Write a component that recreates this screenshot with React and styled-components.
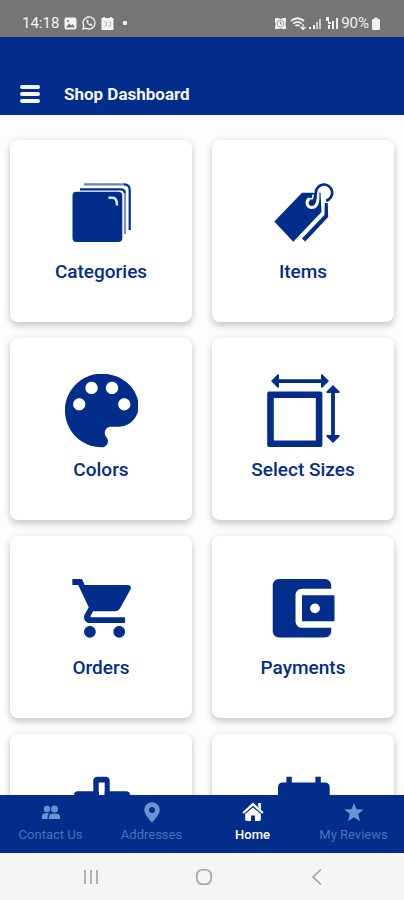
import React from "react";
import styled, { createGlobalStyle } from "styled-components";

const BLUE = "#022d8b";

const GlobalStyle = createGlobalStyle`
  *, *::before, *::after { box-sizing: border-box; }
  body {
    margin: 0;
    background: #fff;
    font-family: Roboto, "Liberation Sans", sans-serif;
  }
  button { font: inherit; border: 0; padding: 0; cursor: pointer; }
`;

const Screen = styled.div`
  display: flex;
  flex-direction: column;
  height: 100vh;
  overflow: hidden;
`;

const StatusBar = styled.div`
  display: flex;
  justify-content: space-between;
  align-items: flex-end;
  flex: none;
  height: 37px;
  padding: 0 24px 6px 22px;
  background: #757575;
  color: #f2f2f2;
  font-size: 15px;
  line-height: 16px;
`;

const StatusGroup = styled.div`
  display: flex;
  align-items: center;
  gap: ${(p) => p.$gap}px;
`;

const Dot = styled.span`
  width: 4px;
  height: 4px;
  margin-left: 4px;
  border-radius: 1px;
  background: currentColor;
`;

const Header = styled.header`
  display: flex;
  align-items: flex-end;
  gap: 24px;
  flex: none;
  height: 78px;
  padding: 0 20px 10px;
  background: ${BLUE};
  color: #f4f6ff;
`;

const MenuButton = styled.button`
  display: flex;
  flex-direction: column;
  justify-content: center;
  gap: 3px;
  width: 20px;
  height: 22px;
  background: none;
`;

const MenuLine = styled.span`
  height: 4px;
  border-radius: 2px;
  background: #f4f6ff;
`;

const Title = styled.h1`
  margin: 0;
  font-size: 17px;
  font-weight: 700;
  line-height: 22px;
`;

const Content = styled.main`
  flex: 1;
  min-height: 0;
  overflow-y: auto;
  scrollbar-width: none;
  padding: 25px 10px;
  background: #fdfdfd;
`;

const CardGrid = styled.div`
  display: grid;
  grid-template-columns: 1fr 1fr;
  gap: 16px 20px;
`;

const Card = styled.button`
  display: flex;
  flex-direction: column;
  align-items: center;
  justify-content: flex-start;
  gap: 10px;
  height: 182px;
  padding-top: 36px;
  border-radius: 8px;
  background: #fff;
  color: ${BLUE};
  box-shadow: 0 4px 7px rgba(0, 0, 0, 0.18), 0 0 9px rgba(0, 0, 0, 0.07);
`;

const CardIcon = styled.svg`
  display: block;
  width: 74px;
  height: 74px;
  fill: currentColor;
`;

const CardLabel = styled.span`
  font-size: 19px;
  font-weight: 500;
  line-height: 24px;
`;

const TabBar = styled.nav`
  display: grid;
  grid-template-columns: repeat(4, 1fr);
  flex: none;
  height: 58px;
  background: ${BLUE};
`;

const Tab = styled.a`
  display: flex;
  flex-direction: column;
  align-items: center;
  gap: 4px;
  padding-top: 6px;
  color: ${(p) => (p.$active ? "#fff" : "#4a72ba")};
  font-size: 13px;
  font-weight: ${(p) => (p.$active ? 500 : 400)};
  line-height: 16px;
  text-decoration: none;
  white-space: nowrap;
`;

const TabIcon = styled.svg`
  display: block;
  width: 24px;
  height: 22px;
  fill: ${(p) => (p.$active ? "#fff" : "#6a93d3")};
`;

const SystemBar = styled.div`
  display: grid;
  grid-template-columns: repeat(3, 1fr);
  flex: none;
  height: 47px;
  padding: 0 31px 0 34px;
  background: #f5f5f5;
`;

const SystemButton = styled.button`
  display: flex;
  align-items: center;
  justify-content: center;
  background: none;
`;

const SystemIcon = styled.svg`
  width: 18px;
  height: 18px;
  fill: none;
  stroke: #a0a0a0;
  stroke-width: 1.6;
`;

const categories = (
  <>
    <rect x="8.5" y="15.7" width="49.8" height="50.3" rx="4" />
    <g fill="none" strokeWidth="2.2">
      <path d="M16 13.3H57Q61 13.3 61 18" stroke={BLUE} />
      <path d="M61 17V58" stroke="#8292bd" />
      <path d="M20 8.4H61" stroke="#6d80b4" />
      <path d="M60 8.4Q65.7 8.4 65.7 14V54" stroke={BLUE} />
      <path d="M44.5 21.7H49Q53 22 53 29.5" stroke="#dfe6fa" strokeWidth="2.6" />
    </g>
  </>
);

const items = (
  <>
    <path d="M8.3 45.6 36 16.7H54.5L55.5 36 27.3 65.7Z" />
    <path d="M58.8 27H61.8L62.2 41 39.2 65.4 36 62.4 58.4 39Z" />
    <g fill="none">
      <path d="M51.8 17C52.6 26 51 31.6 45.4 31.6A4.8 4.8 0 0 1 43.6 22.6" stroke="#fff" strokeWidth="3" />
      <path d="M49.6 17A8.2 8.2 0 1 1 60 24.7" stroke="#fff" strokeWidth="5.4" />
      <path d="M44.5 27C49.6 27 49.4 22 49.8 17A8.2 8.2 0 1 1 60 24.7" stroke={BLUE} strokeWidth="2.6" />
      <path d="M43.4 22.8H46.2Q47 20.5 47.2 18.5" stroke="#fff" strokeWidth="1.6" />
    </g>
  </>
);

const colors = (
  <path
    transform="translate(-11.3 -12.6) scale(4.09)"
    d="M12 3c-4.97 0-9 4.03-9 9s4.03 9 9 9c.83 0 1.5-.67 1.5-1.5 0-.39-.15-.74-.39-1.01-.23-.26-.38-.61-.38-.99 0-.83.67-1.5 1.5-1.5H16c2.76 0 5-2.24 5-5 0-4.42-4.03-8-9-8zm-5.5 9c-.83 0-1.5-.67-1.5-1.5S5.67 9 6.5 9 8 9.67 8 10.5 7.33 12 6.5 12zm3-4C8.67 8 8 7.33 8 6.5S8.67 5 9.5 5s1.5.67 1.5 1.5S10.33 8 9.5 8zm5 0c-.83 0-1.5-.67-1.5-1.5S13.67 5 14.5 5s1.5.67 1.5 1.5S15.33 8 14.5 8zm3 4c-.83 0-1.5-.67-1.5-1.5S16.67 9 17.5 9s1.5.67 1.5 1.5-.67 1.5-1.5 1.5z"
  />
);

const sizes = (
  <>
    <path
      fillRule="evenodd"
      d="M3 17.6H54.6Q56.4 17.6 56.4 19.4V71.2Q56.4 73 54.6 73H3Q1.2 73 1.2 71.2V19.4Q1.2 17.6 3 17.6ZM7.8 24V66.4H49.8V24Z"
    />
    <path d="M5 7 12 0 13 1V5.2H55V1L56 0 63 7 56 14 55 13V8.9H13V13L12 14Z" />
    <path d="M67 11 74 18 73 19H68.9V61H73L74 62 67 69 60 62 61 61H65.1V19H61L60 18Z" />
  </>
);

const orders = (
  <path
    transform="translate(5.4 1.2) scale(2.93)"
    d="M7 18c-1.1 0-1.99.9-1.99 2S5.9 22 7 22s2-.9 2-2-.9-2-2-2zM1 2v2h2l3.6 7.59-1.35 2.45c-.16.28-.25.61-.25.96 0 1.1.9 2 2 2h12v-2H7.42c-.14 0-.25-.11-.25-.25l.03-.12.9-1.63h7.45c.75 0 1.41-.41 1.75-1.03l3.58-6.49c.08-.14.12-.31.12-.48 0-.55-.45-1-1-1H5.21l-.94-2H1zm16 16c-1.1 0-1.99.9-1.99 2s.89 2 1.99 2 2-.9 2-2-.9-2-2-2z"
  />
);

const payments = (
  <path
    transform="translate(-3 -2.7) scale(3.25)"
    d="M21 18v1c0 1.1-.9 2-2 2H5c-1.11 0-2-.9-2-2V5c0-1.1.89-2 2-2h14c1.1 0 2 .9 2 2v1h-9c-1.11 0-2 .9-2 2v8c0 1.1.89 2 2 2h9zm-9-2h10V8H12v8zm4-2.5c-.83 0-1.5-.67-1.5-1.5s.67-1.5 1.5-1.5 1.5.67 1.5 1.5-.67 1.5-1.5 1.5z"
  />
);

const bag = (
  <>
    <path
      fillRule="evenodd"
      d="M33 6.7H42Q45.7 7.2 45.7 11V26H29.3V11Q29.3 7.2 33 6.7ZM34.7 12.4V26H40.7V12.4Z"
    />
    <path d="M14 21.3H34.7V25H40.7V21.3H62Q66 21.3 66 25V66H10V25Q10 21.3 14 21.3Z" />
  </>
);

const calendar = (
  <path d="M20.4 6.7H25.8V12.4H49.4V6.7H54.8V12.4H58.6Q63.7 12.4 63.7 17.4V66H12V17.4Q12 12.4 17 12.4H20.4Z" />
);

const cards = [
  { name: "Categories", icon: categories },
  { name: "Items", icon: items },
  { name: "Colors", icon: colors },
  { name: "Select Sizes", icon: sizes },
  { name: "Orders", icon: orders },
  { name: "Payments", icon: payments },
  { name: "Bag", icon: bag, iconOnly: true },
  { name: "Calendar", icon: calendar, iconOnly: true },
];

const tabs = [
  {
    name: "Contact Us",
    icon: (
      <>
        <circle cx="8" cy="8" r="3.2" />
        <path d="M3 18V15.4Q3 12 8 12 9.5 12 10.2 12.6 8.6 14 8.6 16V18Z" />
        <circle cx="15.5" cy="8" r="3.5" />
        <path d="M10 18V15.6Q10 12.4 15.5 12.4T21 15.6V18Z" />
      </>
    ),
  },
  {
    name: "Addresses",
    icon: <path fillRule="evenodd" d="M12 1.2A7.8 7.8 0 0 0 4.2 9C4.2 14 12 21.4 12 21.4S19.8 14 19.8 9A7.8 7.8 0 0 0 12 1.2ZM12 6A3 3 0 1 1 12 12 3 3 0 0 1 12 6Z" />,
  },
  {
    name: "Home",
    active: true,
    icon: (
      <>
        <path d="M12 1.6 22.6 11.2 21.2 12.8 12 4.8 2.8 12.8 1.4 11.2ZM17.2 2H20V8.4L17.2 6Z" />
        <path d="M12 6.4 19.8 13V18.6Q19.8 20 18.4 20H14V14.4H10V20H5.6Q4.2 20 4.2 18.6V13Z" />
      </>
    ),
  },
  {
    name: "My Reviews",
    icon: <path d="M12 1.8 14.5 8.2 21.7 8.6 16.2 13 18 20.2 12 16.3 6 20.2 7.8 13 2.3 8.6 9.5 8.2Z" />,
  },
];

const SignalBars = ({ note }) => (
  <svg width="13" height="13" viewBox="0 0 13 13" fill="#f2f2f2">
    {note ? (
      <>
        <path d="M1 0H4V5H6V7H3V4H1ZM3 8H5V12H3Z" />
        <path d="M7 4H9V12H7ZM11 1H13V12H11Z" />
      </>
    ) : (
      <>
        <path d="M0 10H2V12H0ZM4 8H6V12H4Z" />
        <path d="M7 5H9V12H7ZM10 2H12V12H10Z" opacity="0.7" />
      </>
    )}
  </svg>
);

export default function App() {
  return (
    <Screen>
      <GlobalStyle />
      <StatusBar>
        <StatusGroup $gap={5}>
          <span>14:18</span>
          <svg width="13" height="13" viewBox="0 0 13 13">
            <rect x="0.5" y="0.5" width="12" height="12" rx="2" fill="#f2f2f2" />
            <path d="M2 10.5 5 6.5 7 8.5 8.5 7 11 10.5Z" fill="#757575" />
            <circle cx="4" cy="4" r="1.1" fill="#757575" />
          </svg>
          <svg width="14" height="14" viewBox="0 0 14 14" fill="none" stroke="#f2f2f2">
            <path d="M1 13 1.8 9.8A6 6 0 1 1 4.2 12.2Z" strokeWidth="1.3" />
            <path d="M4.8 4C4.2 7 7 10 10 9.4L9.8 8.2 8.5 7.8 7.8 8.5Q6 7.6 5.6 6.2L6.3 5.4 5.8 4Z" fill="#f2f2f2" strokeWidth="0.6" />
          </svg>
          <svg width="13" height="13" viewBox="0 0 13 13">
            <path d="M0.5 1H2V0H4V1H9V0H11V1H12.5V13H0.5Z" fill="#f2f2f2" />
            <path d="M3.5 5H5.5V9H3.5M8 5H9.5V9H7.5" fill="none" stroke="#b4b4b4" />
          </svg>
          <Dot />
        </StatusGroup>
        <StatusGroup $gap={3}>
          <svg width="13" height="13" viewBox="0 0 13 13">
            <path d="M1 1H4L6.5 2 9 1H12V4L11.5 7 12 12H9.5L6.5 11.5 3.5 12H1L1.5 7 1 4Z" fill="#f2f2f2" />
            <circle cx="6.5" cy="6.7" r="3.4" fill="none" stroke="#a0a0a0" />
            <path d="M6.5 4.6V7H8" fill="none" stroke="#858585" />
          </svg>
          <svg width="16" height="13" viewBox="0 0 16 13" fill="none" stroke="#f2f2f2" strokeWidth="1.7">
            <path d="M1 4Q7.5-1.5 14 4M3.2 6.6Q7.5 3 11.8 6.6M5.4 9Q7.5 7.2 9.6 9" />
            <path d="M13 7V12M10.5 10 13 12.4 15.5 10" strokeWidth="1.3" />
          </svg>
          <SignalBars />
          <SignalBars note />
          <span>90%</span>
          <svg width="8" height="13" viewBox="0 0 8 13" fill="#f2f2f2">
            <path d="M2.5 0.5H5.5V2H7Q8 2 8 3V12Q8 13 7 13H1Q0 13 0 12V3Q0 2 1 2H2.5Z" />
          </svg>
        </StatusGroup>
      </StatusBar>

      <Header>
        <MenuButton aria-label="Menu">
          <MenuLine />
          <MenuLine />
          <MenuLine />
        </MenuButton>
        <Title>Shop Dashboard</Title>
      </Header>

      <Content>
        <CardGrid>
          {cards.map((card) => (
            <Card key={card.name} aria-label={card.iconOnly ? card.name : undefined}>
              <CardIcon viewBox="0 0 74 74" aria-hidden="true">
                {card.icon}
              </CardIcon>
              {!card.iconOnly && <CardLabel>{card.name}</CardLabel>}
            </Card>
          ))}
        </CardGrid>
      </Content>

      <TabBar>
        {tabs.map((tab) => (
          <Tab
            key={tab.name}
            href="#"
            $active={tab.active}
            aria-current={tab.active ? "page" : undefined}
          >
            <TabIcon viewBox="0 0 24 22" $active={tab.active} aria-hidden="true">
              {tab.icon}
            </TabIcon>
            {tab.name}
          </Tab>
        ))}
      </TabBar>

      <SystemBar>
        <SystemButton aria-label="Recent apps">
          <SystemIcon viewBox="0 0 18 18">
            <path d="M3 2V16M9 2V16M15 2V16" />
          </SystemIcon>
        </SystemButton>
        <SystemButton aria-label="Home screen">
          <SystemIcon viewBox="0 0 18 18">
            <rect x="1.8" y="1.8" width="14.4" height="14.4" rx="5.5" />
          </SystemIcon>
        </SystemButton>
        <SystemButton aria-label="Back">
          <SystemIcon viewBox="0 0 18 18">
            <path d="M13 1.5 5 9 13 16.5" />
          </SystemIcon>
        </SystemButton>
      </SystemBar>
    </Screen>
  );
}
